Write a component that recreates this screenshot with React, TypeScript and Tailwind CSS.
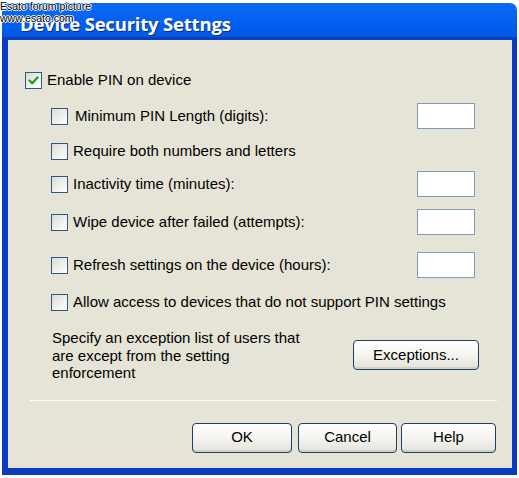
import { type ReactNode } from "react";

const Checkbox = ({ checked = false }: { checked?: boolean }) => (
  <div className="w-[17px] h-[17px] shrink-0 border border-[#2f5a86] bg-linear-to-br from-[#dcdcd5] to-white flex items-center justify-center">
    {checked && (
      <svg width="13" height="13" viewBox="0 0 13 13">
        <path d="M2.5 6.5 L5.2 9.2 L10.5 3.5" fill="none" stroke="#21a121" strokeWidth="2.4" strokeLinecap="round" strokeLinejoin="round" />
      </svg>
    )}
  </div>
);

const XpButton = ({ children, className = "" }: { children: ReactNode; className?: string }) => (
  <button
    className={`h-[30px] border border-[#1e3f66] rounded-[4px] bg-linear-to-b from-white via-[#f4f4f0] to-[#e3e2da] text-[15px] text-black shadow-[inset_0_-2px_0_#d6d0c0] ${className}`}
  >
    {children}
  </button>
);

const Field = () => <div className="w-[58px] h-[26px] border border-[#7f9db9] bg-white" />;

// rows of the PIN section: label, has a value box, space above
const rows = [
  { label: "Minimum PIN Length (digits):", field: true, mt: "mt-[10px]", indent: "ml-[2px]" },
  { label: "Require both numbers and letters", field: false, mt: "mt-[9px]", indent: "" },
  { label: "Inactivity time (minutes):", field: true, mt: "mt-[7px]", indent: "" },
  { label: "Wipe device after failed (attempts):", field: true, mt: "mt-[12px]", indent: "" },
  { label: "Refresh settings on the device (hours):", field: true, mt: "mt-[17px]", indent: "" },
  { label: "Allow access to devices that do not support PIN settings", field: false, mt: "mt-[11px]", indent: "" },
];

export default function App() {
  return (
    <div className="relative w-[519px] h-[478px] bg-white pt-[3px] pl-[2px] font-['Liberation_Sans',Arial,sans-serif] text-black">
      <div className="w-[515px] h-[472px] flex flex-col">
        {/* title bar */}
        <div className="h-[37px] shrink-0 rounded-t-[7px] bg-linear-to-b from-[#0a6af8] to-[#0058e6] border-b-[3px] border-[#0a3fbe] flex items-center pl-[18px] pt-[7px]">
          <span className="text-white text-[18.5px] font-bold font-['Open_Sans',sans-serif] tracking-[-0.2px] [text-shadow:1px_1px_0_#0a2f8a]">
            Device Security Settngs
          </span>
        </div>

        {/* body */}
        <div className="flex-1 bg-[#e5e4d7] border-l-[6px] border-r-[5px] border-b-[7px] border-[#0b3cc0] flex flex-col text-[15px]">
          <div className="mt-[27px] h-[26px] flex items-center gap-[5px] pl-[17px]">
            <Checkbox checked />
            <span>Enable PIN on device</span>
          </div>

          {rows.map((r) => (
            <div key={r.label} className={`${r.mt} h-[26px] flex items-center justify-between pl-[43px] pr-[37px]`}>
              <div className="flex items-center gap-[5px]">
                <Checkbox />
                <span className={r.indent}>{r.label}</span>
              </div>
              {r.field && <Field />}
            </div>
          ))}

          <div className="mt-[14px] flex items-center justify-between pl-[44px] pr-[33px]">
            <p className="w-[260px] leading-[17.5px]">
              Specify an exception list of users that are except from the setting enforcement
            </p>
            <XpButton className="w-[126px]">Exceptions...</XpButton>
          </div>

          <div className="mt-[18px] ml-[22px] mr-[15px] h-px bg-[#cbcabd] border-b border-white" />

          <div className="mt-[22px] flex justify-end pr-[16px]">
            <XpButton className="w-[100px]">OK</XpButton>
            <XpButton className="w-[99px] ml-[6px]">Cancel</XpButton>
            <XpButton className="w-[95px] ml-[4px]">Help</XpButton>
          </div>
        </div>
      </div>

      {/* forum watermark */}
      <div className="absolute left-0 top-0 text-[10.5px] leading-[12px] font-['Liberation_Sans',Arial,sans-serif] text-black [text-shadow:1px_0_0_#fff,-1px_0_0_#fff,0_1px_0_#fff,0_-1px_0_#fff]">
        <div>Esato forum picture</div>
        <div>www.esato.com</div>
      </div>
    </div>
  );
}
